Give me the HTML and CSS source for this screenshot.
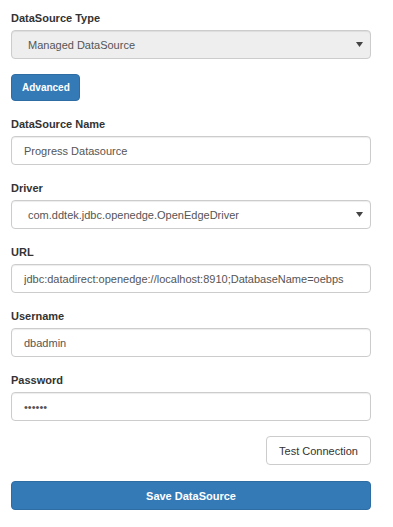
FILE: index.html
```html
<!DOCTYPE html>
<html>
<head>
<meta charset="utf-8">
<link rel="stylesheet" href="styles.css">
</head>
<body>
<form class="ds-form">
  <div class="field">
    <label class="field-label">DataSource Type</label>
    <div class="select-wrap">
      <select class="control control-select is-disabled" disabled>
        <option>Managed DataSource</option>
      </select>
      <svg class="caret" width="7" height="5" viewBox="0 0 7 5"><path d="M0 0H7L3.5 5Z" fill="#444"/></svg>
    </div>
  </div>
  <div class="field">
    <button type="button" class="btn btn-primary btn-small">Advanced</button>
  </div>
  <div class="field">
    <label class="field-label">DataSource Name</label>
    <input class="control" type="text" value="Progress Datasource">
  </div>
  <div class="field">
    <label class="field-label">Driver</label>
    <div class="select-wrap">
      <select class="control control-select">
        <option>com.ddtek.jdbc.openedge.OpenEdgeDriver</option>
      </select>
      <svg class="caret" width="7" height="5" viewBox="0 0 7 5"><path d="M0 0H7L3.5 5Z" fill="#444"/></svg>
    </div>
  </div>
  <div class="field">
    <label class="field-label">URL</label>
    <input class="control" type="text" value="jdbc:datadirect:openedge://localhost:8910;DatabaseName=oebps">
  </div>
  <div class="field">
    <label class="field-label">Username</label>
    <input class="control" type="text" value="dbadmin">
  </div>
  <div class="field">
    <label class="field-label">Password</label>
    <input class="control" type="password" value="secret">
  </div>
  <div class="actions-right">
    <button type="button" class="btn btn-default">Test Connection</button>
  </div>
  <button type="button" class="btn btn-primary btn-block">Save DataSource</button>
</form>
</body>
</html>
```

FILE: styles.css
```css
* {
  box-sizing: border-box;
}

body {
  margin: 0;
  background: #fff;
  font-family: "Liberation Sans", Arial, sans-serif;
  color: #333;
}

.ds-form {
  width: 360px;
  margin: 0;
  padding: 10px 0 0 11px;
  box-sizing: content-box;
}

.field {
  margin-bottom: 15px;
}

.field-label {
  display: block;
  font-size: 11px;
  font-weight: bold;
  line-height: 16px;
  margin-bottom: 4px;
  color: #333;
}

.control {
  display: block;
  width: 100%;
  height: 29px;
  margin: 0;
  padding: 0 12px;
  font-family: "Liberation Sans", Arial, sans-serif;
  font-size: 11px;
  color: #555;
  background: #fff;
  border: 1px solid #ccc;
  border-radius: 4px;
  box-shadow: inset 0 1px 1px rgba(0, 0, 0, 0.075);
  outline: none;
}

.control-select {
  -webkit-appearance: none;
  appearance: none;
  padding: 0 24px 0 16px;
}

.control-select.is-disabled {
  background: #eee;
  color: #555;
  opacity: 1;
}

.select-wrap {
  position: relative;
}

.caret {
  position: absolute;
  right: 8px;
  top: 12px;
  pointer-events: none;
}

.btn {
  display: inline-block;
  margin: 0;
  font-family: "Liberation Sans", Arial, sans-serif;
  font-size: 11px;
  border: 1px solid transparent;
  border-radius: 4px;
  cursor: pointer;
  text-align: center;
  white-space: nowrap;
}

.btn-primary {
  color: #fff;
  background: #337ab7;
  border-color: #2e6da4;
  font-weight: bold;
}

.btn-small {
  height: 27px;
  padding: 0 10px;
  font-size: 10px;
  width: 69px;
}

.btn-default {
  color: #333;
  background: #fff;
  border-color: #ccc;
  height: 29px;
  width: 105px;
  padding: 0 12px;
}

.btn-block {
  display: block;
  width: 100%;
  height: 29px;
}

.actions-right {
  display: flex;
  justify-content: flex-end;
  margin-bottom: 16px;
}
```
